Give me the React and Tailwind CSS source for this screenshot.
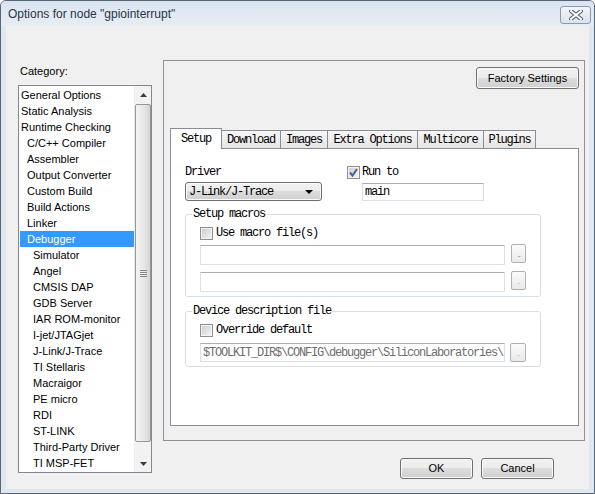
import React from "react";

const sans = "font-['Liberation_Sans',Arial,sans-serif]";
const mono = "font-['Liberation_Mono','Courier_New',monospace] text-[12px] tracking-[-1.2px]";

const categories = [
  ["General Options", 0],
  ["Static Analysis", 0],
  ["Runtime Checking", 0],
  ["C/C++ Compiler", 1],
  ["Assembler", 1],
  ["Output Converter", 1],
  ["Custom Build", 1],
  ["Build Actions", 1],
  ["Linker", 1],
  ["Debugger", 1],
  ["Simulator", 2],
  ["Angel", 2],
  ["CMSIS DAP", 2],
  ["GDB Server", 2],
  ["IAR ROM-monitor", 2],
  ["I-jet/JTAGjet", 2],
  ["J-Link/J-Trace", 2],
  ["TI Stellaris", 2],
  ["Macraigor", 2],
  ["PE micro", 2],
  ["RDI", 2],
  ["ST-LINK", 2],
  ["Third-Party Driver", 2],
  ["TI MSP-FET", 2],
];

const indent = ["pl-[1px]", "pl-[7px]", "pl-[13px]"];

const tabs = [
  ["Setup", "w-[52px]"],
  ["Download", "w-[59px]"],
  ["Images", "w-[47px]"],
  ["Extra Options", "w-[90px]"],
  ["Multicore", "w-[66px]"],
  ["Plugins", "w-[52px]"],
];

const btnBg =
  "bg-[linear-gradient(to_bottom,#f2f2f2_0%,#ebebeb_50%,#dddddd_50%,#cfcfcf_100%)]";

const WinButton = ({ children, className = "" }) => (
  <div
    className={`${btnBg} ${sans} rounded-[3px] border border-[#707070] shadow-[inset_0_0_0_1px_#fafafa] flex items-center justify-center text-[11px] text-black ${className}`}
  >
    {children}
  </div>
);

const CheckBox = ({ checked }) => (
  <div className="w-[13px] h-[13px] border border-[#8e8f8f] bg-[linear-gradient(135deg,#cbcbcb,#f6f6f6)] shadow-[inset_0_0_0_1px_#f4f4f4] flex items-center justify-center shrink-0">
    {checked && (
      <svg width="11" height="11" viewBox="0 0 11 11">
        <path
          d="M2 5.5 L4.5 8.5 L9 2"
          fill="none"
          stroke="#4a5f97"
          strokeWidth="2"
        />
      </svg>
    )}
  </div>
);

const TextBox = ({ className = "", children }) => (
  <div
    className={`bg-white border border-[#dbdfe6] border-t-[#abadb3] flex items-center pl-[2px] overflow-hidden whitespace-nowrap ${className}`}
  >
    {children}
  </div>
);

const DotsButton = ({ className = "", dim }) => (
  <div
    className={`w-[15px] h-[19px] rounded-[2px] border border-[#adb2b5] bg-[linear-gradient(to_bottom,#fbfbfb,#e9e9e9)] flex items-end justify-center pb-[3px] ${className}`}
  >
    <span className={`text-[8px] leading-[8px] ${dim ? "text-[#b0b0b0]" : "text-[#707070]"} ${sans}`}>..</span>
  </div>
);

const GroupBox = ({ title, className = "", children }) => (
  <div className={`relative border border-[#d5dfe5] rounded-[3px] w-[356px] ${className}`}>
    <span className={`absolute -top-[8px] left-[6px] bg-white px-[1px] leading-[14px] text-black ${mono}`}>
      {title}
    </span>
    {children}
  </div>
);

const Arrow = ({ down }) => (
  <svg width="7" height="4" viewBox="0 0 7 4">
    <path d={down ? "M0 0 H7 L3.5 4 Z" : "M0 4 H7 L3.5 0 Z"} fill="#3c3c3c" />
  </svg>
);

const CategoryList = () => (
  <div className="w-[134px] h-[388px] border border-[#828790] bg-white flex">
    <div className="flex-1 pl-[1px] pt-[1px]">
      {categories.map(([name, level]) => (
        <div
          key={name}
          className={`h-[16px] leading-[16px] text-[11px] whitespace-nowrap ${indent[level]} ${
            name === "Debugger" ? "bg-[#3399ff] text-white" : "text-black"
          }`}
        >
          {name}
        </div>
      ))}
    </div>
    {/* scrollbar */}
    <div className="w-[17px] h-full flex flex-col bg-[#f2f2f2] border-l border-[#ececec]">
      <div className="h-[18px] flex items-center justify-center">
        <Arrow />
      </div>
      <div className="h-[338px] w-[16px] rounded-[2px] border border-[#979797] bg-[linear-gradient(to_right,#f4f4f4,#e6e6e6_60%,#d4d4d4)] flex flex-col items-center justify-center gap-[1px]">
        <div className="w-[7px] h-px bg-[#8a8a8a]" />
        <div className="w-[7px] h-px bg-[#8a8a8a]" />
        <div className="w-[7px] h-px bg-[#8a8a8a]" />
        <div className="w-[7px] h-px bg-[#8a8a8a]" />
      </div>
      <div className="flex-1" />
      <div className="h-[17px] flex items-center justify-center">
        <Arrow down />
      </div>
    </div>
  </div>
);

const SetupPage = () => (
  <div className={`pl-[14px] pt-[16px] text-black ${mono}`}>
    {/* Driver / Run to */}
    <div className="flex">
      <div className="w-[137px]">
        <div className="h-[14px] leading-[14px]">Driver</div>
        <div className={`${btnBg} mt-[3px] h-[19px] rounded-[3px] border border-[#707070] shadow-[inset_0_0_0_1px_#fafafa] flex items-center justify-between pl-[3px] pr-[8px]`}>
          <span>J-Link/J-Trace</span>
          <svg width="8" height="4" viewBox="0 0 8 4">
            <path d="M0 0 H8 L4 4 Z" fill="#000" />
          </svg>
        </div>
      </div>
      <div className="ml-[25px]">
        <div className="h-[14px] flex items-center gap-[2px]">
          <CheckBox checked />
          <span className="leading-[14px]">Run to</span>
        </div>
        <TextBox className="mt-[4px] ml-[15px] w-[122px] h-[18px]">main</TextBox>
      </div>
    </div>

    {/* Setup macros */}
    <GroupBox title="Setup macros" className="mt-[13px] h-[83px]">
      <div className="pl-[14px] pt-[11px]">
        <div className="h-[14px] flex items-center gap-[3px]">
          <CheckBox />
          <span className="leading-[14px]">Use macro file(s)</span>
        </div>
        <div className="flex mt-[5px]">
          <TextBox className="w-[305px] h-[20px]" />
          <DotsButton className="ml-[6px] -mt-px" />
        </div>
        <div className="flex mt-[7px]">
          <TextBox className="w-[305px] h-[20px]" />
          <DotsButton className="ml-[6px] -mt-px" dim />
        </div>
      </div>
    </GroupBox>

    {/* Device description file */}
    <GroupBox title="Device description file" className="mt-[14px] h-[56px]">
      <div className="pl-[14px] pt-[11px]">
        <div className="h-[14px] flex items-center gap-[3px]">
          <CheckBox />
          <span className="leading-[14px]">Override default</span>
        </div>
        <div className="flex mt-[6px]">
          <TextBox className="w-[305px] h-[19px] text-[#6d6d6d]">
            $TOOLKIT_DIR$\CONFIG\debugger\SiliconLaboratories\
          </TextBox>
          <DotsButton className="ml-[5px] w-[16px]" dim />
        </div>
      </div>
    </GroupBox>
  </div>
);

export default function App() {
  return (
    <div className={`w-[595px] h-[494px] bg-white ${sans}`}>
      <div className="w-[595px] h-[494px] rounded-t-[6px] border border-[#5a6574] bg-[#dfe7f0] flex flex-col">
        {/* Title bar */}
        <div className="h-[25px] flex items-center justify-between pl-[7px] pr-[3px] bg-gradient-to-b from-[#dbe5f1] to-[#e7edf5] rounded-t-[5px]">
          <span className="text-[12px] text-[#2a3644]">Options for node "gpiointerrupt"</span>
          <div className="w-[31px] h-[18px] mt-[2px] rounded-[3px] border border-[#8d98a8] bg-gradient-to-b from-[#f3f6fa] to-[#dae2ec] flex items-center justify-center">
            <svg width="14" height="10" viewBox="0 0 14 10">
              <path d="M2 1 L12 9 M12 1 L2 9" stroke="#4b5b70" strokeWidth="4" strokeLinecap="square" />
              <path d="M2 1 L12 9 M12 1 L2 9" stroke="#ffffff" strokeWidth="2" strokeLinecap="square" />
            </svg>
          </div>
        </div>

        {/* Client area */}
        <div className="flex-1 mx-[5px] mb-[4px] bg-[#f0f0f0] flex items-start pt-[34px] pl-[12px]">
          {/* Category column */}
          <div className="mt-[4px]">
            <div className="h-[14px] leading-[14px] text-[11px] text-black pl-[2px]">Category:</div>
            <div className="mt-[7px]">
              <CategoryList />
            </div>
          </div>

          {/* Right column */}
          <div className="ml-[11px] flex flex-col">
            <div className="w-[422px] h-[381px] border border-[#8f9196]">
              <div className="flex justify-end pt-[6px] pr-[5px]">
                <WinButton className="w-[103px] h-[22px]">Factory Settings</WinButton>
              </div>

              <div className="mt-[39px] pl-[6px]">
                {/* Tab strip */}
                <div className="relative z-10 flex items-end h-[21px]">
                  {tabs.map(([label, w], i) =>
                    i === 0 ? (
                      <div
                        key={label}
                        className={`${w} h-[21px] bg-white border border-b-0 border-[#898c95] flex items-center justify-center pb-[1px] text-black ${mono}`}
                      >
                        {label}
                      </div>
                    ) : (
                      <div
                        key={label}
                        className={`${w} h-[18px] mb-px bg-gradient-to-b from-[#f6f6f6] to-[#e5e5e5] border border-b-0 border-l-0 border-[#898c95] flex items-center justify-center pt-[1px] text-black ${mono}`}
                      >
                        {label}
                      </div>
                    )
                  )}
                </div>
                {/* Tab page */}
                <div className="-mt-px w-[409px] h-[278px] bg-white border border-[#898c95]">
                  <SetupPage />
                </div>
              </div>
            </div>

            <div className="flex justify-end gap-[8px] mt-[17px] pr-[31px]">
              <WinButton className="w-[73px] h-[21px]">OK</WinButton>
              <WinButton className="w-[73px] h-[21px]">Cancel</WinButton>
            </div>
          </div>
        </div>
      </div>
    </div>
  );
}
